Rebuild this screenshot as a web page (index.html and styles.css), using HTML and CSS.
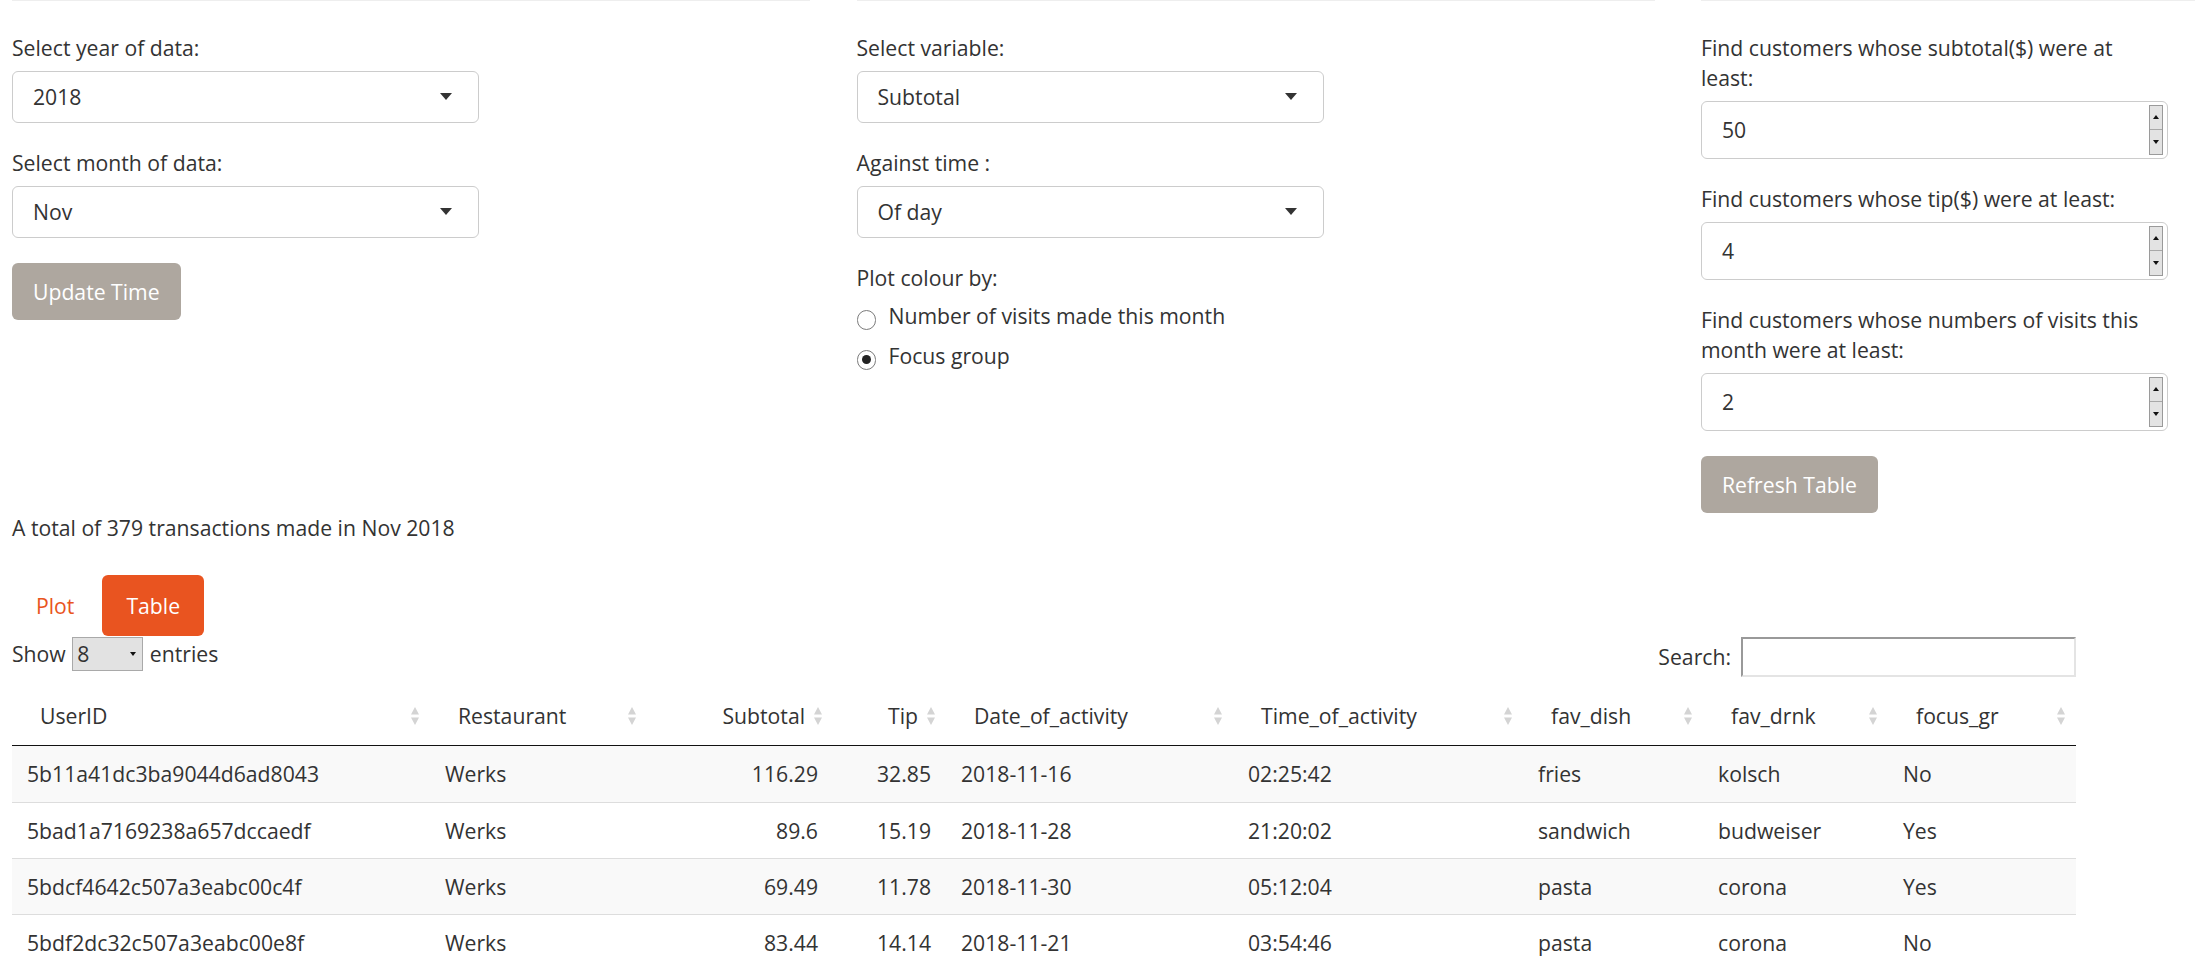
FILE: index.html
```html
<!DOCTYPE html>
<html lang="en">
<head>
<meta charset="utf-8">
<title>Transactions</title>
<link rel="stylesheet" href="styles.css">
</head>
<body>
<div class="page">
  <div class="controls">
    <div class="col">
      <div class="form-group">
        <label class="ctl-label">Select year of data:</label>
        <div class="select"><span>2018</span><span class="caret"></span></div>
      </div>
      <div class="form-group">
        <label class="ctl-label">Select month of data:</label>
        <div class="select"><span>Nov</span><span class="caret"></span></div>
      </div>
      <button class="btn">Update Time</button>
    </div>
    <div class="col">
      <div class="form-group">
        <label class="ctl-label">Select variable:</label>
        <div class="select"><span>Subtotal</span><span class="caret"></span></div>
      </div>
      <div class="form-group">
        <label class="ctl-label">Against time :</label>
        <div class="select"><span>Of day</span><span class="caret"></span></div>
      </div>
      <div class="form-group">
        <label class="ctl-label">Plot colour by:</label>
        <div class="radio"><span class="radio-dot"></span><span class="radio-text">Number of visits made this month</span></div>
        <div class="radio"><span class="radio-dot checked"></span><span class="radio-text">Focus group</span></div>
      </div>
    </div>
    <div class="col">
      <div class="form-group">
        <label class="ctl-label">Find customers whose subtotal($) were at least:</label>
        <div class="num"><span>50</span><span class="spin"><span class="spin-half"><span class="tri-up"></span></span><span class="spin-half"><span class="tri-down"></span></span></span></div>
      </div>
      <div class="form-group">
        <label class="ctl-label">Find customers whose tip($) were at least:</label>
        <div class="num"><span>4</span><span class="spin"><span class="spin-half"><span class="tri-up"></span></span><span class="spin-half"><span class="tri-down"></span></span></span></div>
      </div>
      <div class="form-group">
        <label class="ctl-label">Find customers whose numbers of visits this month were at least:</label>
        <div class="num"><span>2</span><span class="spin"><span class="spin-half"><span class="tri-up"></span></span><span class="spin-half"><span class="tri-down"></span></span></span></div>
      </div>
      <button class="btn">Refresh Table</button>
    </div>
  </div>

  <p class="summary">A total of 379 transactions made in Nov 2018</p>

  <ul class="pills">
    <li><a class="pill">Plot</a></li>
    <li><a class="pill active">Table</a></li>
  </ul>

  <div class="dt-top">
    <div class="length">Show <span class="len-select"><span>8</span><span class="len-caret"></span></span> entries</div>
    <div class="search">Search: <span class="search-box"></span></div>
  </div>

  <table class="data">
    <colgroup>
      <col class="w1"><col class="w2"><col class="w3"><col class="w4"><col class="w5"><col class="w6"><col class="w7"><col class="w8"><col class="w9">
    </colgroup>
    <thead>
      <tr>
        <th>UserID<svg class="sort" viewBox="0 0 10 20"><path d="M5 1 L9 8.5 L1 8.5 Z"/><path d="M1 11.5 L9 11.5 L5 19 Z"/></svg></th>
        <th>Restaurant<svg class="sort" viewBox="0 0 10 20"><path d="M5 1 L9 8.5 L1 8.5 Z"/><path d="M1 11.5 L9 11.5 L5 19 Z"/></svg></th>
        <th class="right">Subtotal<svg class="sort" viewBox="0 0 10 20"><path d="M5 1 L9 8.5 L1 8.5 Z"/><path d="M1 11.5 L9 11.5 L5 19 Z"/></svg></th>
        <th class="right">Tip<svg class="sort" viewBox="0 0 10 20"><path d="M5 1 L9 8.5 L1 8.5 Z"/><path d="M1 11.5 L9 11.5 L5 19 Z"/></svg></th>
        <th>Date_of_activity<svg class="sort" viewBox="0 0 10 20"><path d="M5 1 L9 8.5 L1 8.5 Z"/><path d="M1 11.5 L9 11.5 L5 19 Z"/></svg></th>
        <th>Time_of_activity<svg class="sort" viewBox="0 0 10 20"><path d="M5 1 L9 8.5 L1 8.5 Z"/><path d="M1 11.5 L9 11.5 L5 19 Z"/></svg></th>
        <th>fav_dish<svg class="sort" viewBox="0 0 10 20"><path d="M5 1 L9 8.5 L1 8.5 Z"/><path d="M1 11.5 L9 11.5 L5 19 Z"/></svg></th>
        <th>fav_drnk<svg class="sort" viewBox="0 0 10 20"><path d="M5 1 L9 8.5 L1 8.5 Z"/><path d="M1 11.5 L9 11.5 L5 19 Z"/></svg></th>
        <th>focus_gr<svg class="sort" viewBox="0 0 10 20"><path d="M5 1 L9 8.5 L1 8.5 Z"/><path d="M1 11.5 L9 11.5 L5 19 Z"/></svg></th>
      </tr>
    </thead>
    <tbody>
      <tr class="odd"><td>5b11a41dc3ba9044d6ad8043</td><td>Werks</td><td class="right">116.29</td><td class="right">32.85</td><td>2018-11-16</td><td>02:25:42</td><td>fries</td><td>kolsch</td><td>No</td></tr>
      <tr><td>5bad1a7169238a657dccaedf</td><td>Werks</td><td class="right">89.6</td><td class="right">15.19</td><td>2018-11-28</td><td>21:20:02</td><td>sandwich</td><td>budweiser</td><td>Yes</td></tr>
      <tr class="odd"><td>5bdcf4642c507a3eabc00c4f</td><td>Werks</td><td class="right">69.49</td><td class="right">11.78</td><td>2018-11-30</td><td>05:12:04</td><td>pasta</td><td>corona</td><td>Yes</td></tr>
      <tr><td>5bdf2dc32c507a3eabc00e8f</td><td>Werks</td><td class="right">83.44</td><td class="right">14.14</td><td>2018-11-21</td><td>03:54:46</td><td>pasta</td><td>corona</td><td>No</td></tr>
    </tbody>
  </table>
</div>
</body>
</html>
```

FILE: styles.css
```css
html {
  overflow: hidden;
}

body {
  margin: 0;
  background: #ffffff;
  color: #333333;
  font-family: "Open Sans", "Liberation Sans", sans-serif;
  font-size: 21.2px;
  line-height: 30px;
}

.page {
  padding-left: 12px;
}

.controls {
  display: grid;
  grid-template-columns: 798px 798px 798px;
  column-gap: 46.5px;
  align-items: start;
}

.col {
  border-top: 1px solid #eeeeee;
  padding-top: 32px;
}

.form-group {
  width: 467px;
  margin-bottom: 25.5px;
}

.ctl-label {
  display: block;
  margin-bottom: 7.5px;
  padding-right: 14px;
}

.select {
  box-sizing: border-box;
  height: 52px;
  border: 1px solid #cccccc;
  border-radius: 6px;
  padding: 0 26px 0 20px;
  display: flex;
  align-items: center;
  justify-content: space-between;
  background: #ffffff;
}

.caret {
  width: 0;
  height: 0;
  border-left: 6.5px solid transparent;
  border-right: 6.5px solid transparent;
  border-top: 7px solid #333333;
}

.btn {
  display: block;
  height: 57px;
  padding: 0 21px;
  border: none;
  border-radius: 6px;
  background: #aea79f;
  color: #ffffff;
  font-family: inherit;
  font-size: 21.2px;
  line-height: 30px;
}

.radio {
  display: flex;
  align-items: flex-start;
  height: 30px;
  margin-bottom: 10px;
}

.radio-dot {
  box-sizing: border-box;
  width: 19.5px;
  height: 19.5px;
  margin-top: 9.5px;
  border: 1.5px solid #7b7b7b;
  border-radius: 50%;
  background: #ffffff;
  display: flex;
  align-items: center;
  justify-content: center;
  flex: none;
}

.radio-dot.checked::after {
  content: "";
  width: 9px;
  height: 9px;
  border-radius: 50%;
  background: #222222;
}

.radio-text {
  margin-left: 12.5px;
}

.num {
  box-sizing: border-box;
  height: 58px;
  border: 1px solid #cccccc;
  border-radius: 6px;
  padding: 0 4px 0 20px;
  display: flex;
  align-items: center;
  justify-content: space-between;
}

.spin {
  box-sizing: border-box;
  width: 14px;
  height: 50px;
  border: 1px solid #9a9a9a;
  background: #e3e3e3;
  display: flex;
  flex-direction: column;
}

.spin-half {
  flex: 1;
  display: flex;
  align-items: center;
  justify-content: center;
}

.spin-half + .spin-half {
  border-top: 1px solid #a8a8a8;
}

.tri-up {
  width: 0;
  height: 0;
  border-left: 3.5px solid transparent;
  border-right: 3.5px solid transparent;
  border-bottom: 4.5px solid #111111;
}

.tri-down {
  width: 0;
  height: 0;
  border-left: 3.5px solid transparent;
  border-right: 3.5px solid transparent;
  border-top: 4.5px solid #111111;
}

.summary {
  margin: 0;
}

.pills {
  list-style: none;
  margin: 32px 0 0 0;
  padding: 0;
  display: flex;
  gap: 4px;
}

.pill {
  display: block;
  padding: 15.5px 24px;
  border-radius: 6px;
  color: #e95420;
}

.pill.active {
  background: #e95420;
  color: #ffffff;
}

.dt-top {
  width: 2064px;
  margin-top: 1px;
  display: flex;
  justify-content: space-between;
  align-items: flex-start;
}

.length {
  display: flex;
  align-items: center;
  height: 34px;
  white-space: pre;
}

.len-select {
  box-sizing: border-box;
  width: 71px;
  height: 34px;
  margin: 0 1px;
  padding: 0 6px 0 4px;
  border: 1px solid #a9a9a9;
  background: #e2e2e2;
  display: flex;
  align-items: center;
  justify-content: space-between;
}

.len-caret {
  width: 0;
  height: 0;
  border-left: 3px solid transparent;
  border-right: 3px solid transparent;
  border-top: 4px solid #111111;
}

.search {
  display: flex;
  align-items: center;
  height: 40px;
}

.search-box {
  box-sizing: border-box;
  width: 335px;
  height: 40px;
  margin-left: 10px;
  border-style: solid;
  border-width: 2px;
  border-color: #999999 #e4e4e4 #e4e4e4 #999999;
  background: #ffffff;
}

.data {
  margin-top: 10px;
  width: 2064px;
  table-layout: fixed;
  border-collapse: separate;
  border-spacing: 0;
}

.w1 { width: 418px; }
.w2 { width: 217px; }
.w3 { width: 186px; }
.w4 { width: 113px; }
.w5 { width: 287px; }
.w6 { width: 290px; }
.w7 { width: 180px; }
.w8 { width: 185px; }
.w9 { width: 188px; }

.data th {
  position: relative;
  padding: 14px 28px;
  font-weight: normal;
  text-align: left;
  white-space: nowrap;
  border-bottom: 1px solid #111111;
}

.data th.right,
.data td.right {
  text-align: right;
}

.sort {
  position: absolute;
  right: 10px;
  top: 50%;
  width: 10px;
  height: 20px;
  margin-top: -10px;
  fill: #d4d4d4;
}

.data td {
  padding: 12.5px 15px;
  border-top: 1px solid #dddddd;
  white-space: nowrap;
}

.data tbody tr:first-child td {
  border-top: none;
  padding-top: 13px;
  padding-bottom: 13px;
}

.data tr.odd td {
  background: #f9f9f9;
}
```
